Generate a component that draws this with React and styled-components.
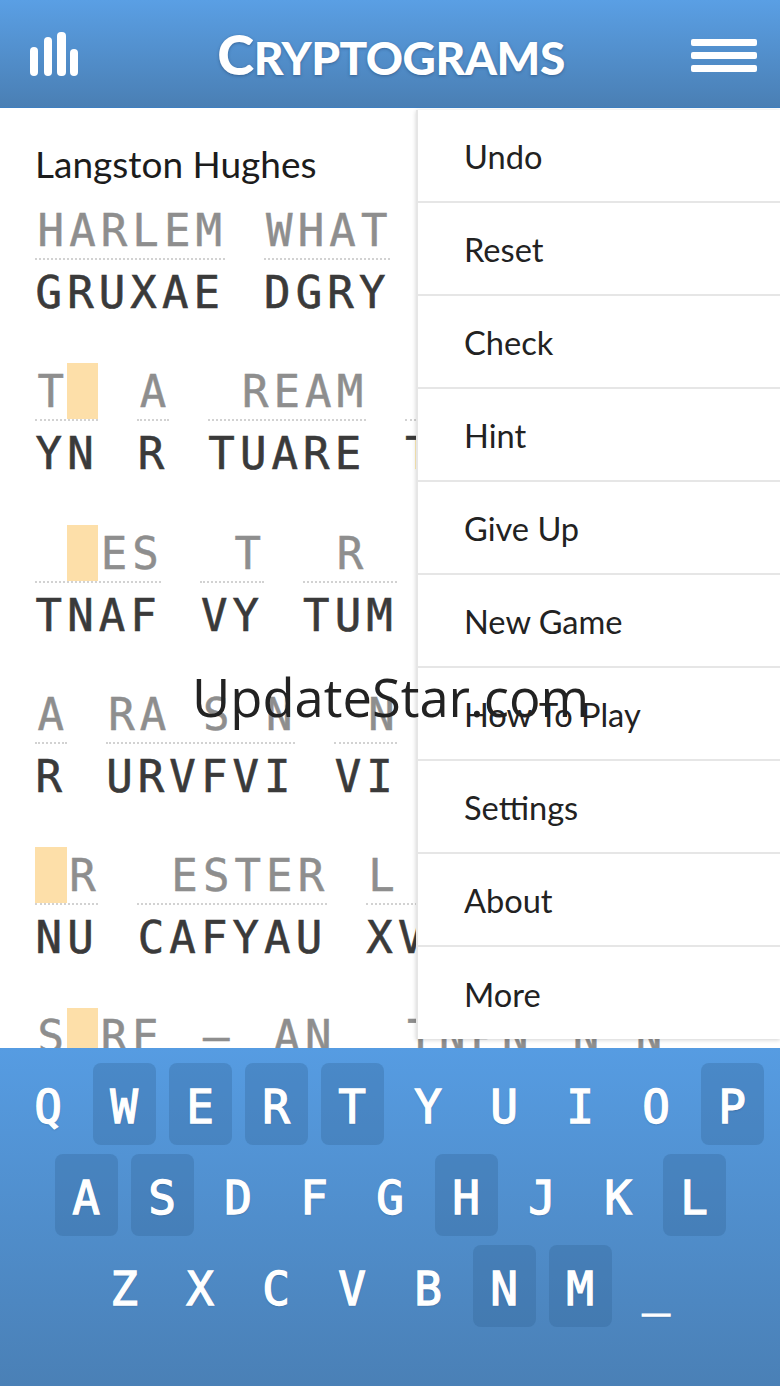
import styled, {createGlobalStyle} from "styled-components";

const GlobalStyle = createGlobalStyle`
  html, body {
    margin: 0;
    padding: 0;
    background: white;
  }
`;

const Page = styled.div`
  display: flex;
  flex-direction: column;
  position: relative;
  width: 780px;
  height: 1386px;
  overflow: hidden;
  font-family: "Lato", sans-serif;
`;

const Header = styled.div`
  display: flex;
  align-items: center;
  justify-content: space-between;
  flex: 0 0 108px;
  box-sizing: border-box;
  padding: 0 23px 0 30px;
  background: linear-gradient(#5a9fe4, #4a7fb4);
  border-bottom: 1px solid #3f7fc0;
`;

const Title = styled.div`
  margin-left: 13px;
  color: white;
  font-weight: 900;
  font-size: 46px;
  line-height: 1;
  letter-spacing: -0.5px;
  text-shadow: 0 1px 3px rgba(30, 60, 100, 0.5);
`;

const BigLetter = styled.span`
  font-size: 56px;
`;

const Burger = styled.div`
  display: flex;
  flex-direction: column;
  gap: 6px;
  width: 66px;
  margin-top: 3px;
`;

const BurgerLine = styled.div`
  height: 7px;
  border-radius: 2px;
  background: white;
`;

const Board = styled.div`
  flex: 0 0 940px;
  box-sizing: border-box;
  padding: 34px 0 0 35px;
  overflow: hidden;
  background: white;
`;

const Author = styled.div`
  color: #1c1c1c;
  font-size: 37px;
  line-height: 44px;
  height: 60px;
`;

const Line = styled.div`
  display: flex;
  gap: 39px;
  height: 161.25px;
  white-space: nowrap;
`;

const Word = styled.div`
  display: flex;
  flex-direction: column;
`;

const HintRow = styled.div`
  display: flex;
  height: 56px;
  border-bottom: 2px dotted #d2d2d2;
`;

const HintCell = styled.div`
  width: 31.6px;
  flex: none;
  font-family: "DejaVu Sans Mono", monospace;
  font-size: 44px;
  line-height: 58px;
  text-align: center;
  color: #8e8e8e;
  -webkit-text-stroke: 0.5px #8e8e8e;
  background: ${(p) => (p.$active ? "#fddfa9" : "transparent")};
`;

const CipherRow = styled.div`
  display: flex;
  height: 62px;
  margin-left: -2px;
`;

const CipherCell = styled.div`
  width: 31.6px;
  flex: none;
  font-family: "DejaVu Sans Mono", monospace;
  font-size: 44px;
  line-height: 66px;
  text-align: center;
  color: #3a3a3a;
  -webkit-text-stroke: 0.6px #3a3a3a;
`;

const Menu = styled.div`
  position: absolute;
  top: 110px;
  right: 0;
  width: 362px;
  background: white;
  border-left: 2px solid #e6e6e6;
  box-shadow: 0 1px 4px rgba(0, 0, 0, 0.18);
`;

const MenuItem = styled.div`
  box-sizing: border-box;
  height: ${(p) => (p.$last ? "92px" : "93px")};
  padding: 2px 0 0 46px;
  display: flex;
  align-items: center;
  color: #222;
  font-size: 32.6px;
  border-bottom: ${(p) => (p.$last ? "none" : "2px solid #e6e6e6")};
`;

const Keyboard = styled.div`
  flex: 1;
  display: flex;
  flex-direction: column;
  gap: 9px;
  padding-top: 15px;
  background: linear-gradient(#569ce2, #4a80b6);
`;

const KeyRow = styled.div`
  display: flex;
  justify-content: center;
  gap: 13px;
`;

const Key = styled.div`
  box-sizing: border-box;
  width: 63px;
  height: 82px;
  padding-top: 6px;
  border-radius: 8px;
  display: flex;
  align-items: center;
  justify-content: center;
  color: white;
  font-family: "DejaVu Sans Mono", monospace;
  font-size: 46px;
  -webkit-text-stroke: 1.3px white;
  text-shadow: 0 1px 2px rgba(30, 60, 100, 0.4);
  background: ${(p) => (p.$used ? "rgba(50, 100, 150, 0.32)" : "transparent")};
`;

const Watermark = styled.div`
  position: absolute;
  left: 192px;
  top: 660px;
  color: #222;
  font-family: "Open Sans", sans-serif;
  font-size: 52.5px;
  line-height: 74px;
`;

const lines = [
  [["HARLEM", "GRUXAE"], ["WHAT", "DGRY"]],
  [["T*", "YN"], ["A", "R"], [" REAM", "TUARE"], [" ", "T"]],
  [[" *ES", "TNAF"], [" T", "VY"], [" R ", "TUM"]],
  [["A", "R"], ["RA S N", "URVFVI"], [" N", "VI"]],
  [["*R", "NU"], [" ESTER", "CAFYAU"], ["L ", "XV"]],
  [["S*RE", "RRRR"], ["—", "A"], ["AN", "RR"], [" TNPN", "RRRRR"], ["N N", "RRR"]],
];

const menuItems = ["Undo", "Reset", "Check", "Hint", "Give Up", "New Game", "How To Play", "Settings", "About", "More"];

const rows = ["QWERTYUIOP", "ASDFGHJKL", "ZXCVBNM_"];
const usedKeys = "WERTPASHLNM";

function Bars() {
  return (
    <svg width="48" height="44" viewBox="0 0 48 44">
      <rect x="0" y="15" width="8" height="29" rx="4" fill="white"/>
      <rect x="14" y="5" width="8" height="39" rx="4" fill="white"/>
      <rect x="27" y="0" width="9" height="44" rx="4" fill="white"/>
      <rect x="40" y="17" width="8" height="27" rx="4" fill="white"/>
    </svg>
  );
}

export default function App() {
  return (
    <Page>
      <GlobalStyle/>
      <Header>
        <Bars/>
        <Title><BigLetter>C</BigLetter>RYPTOGRAMS</Title>
        <Burger>
          <BurgerLine/>
          <BurgerLine/>
          <BurgerLine/>
        </Burger>
      </Header>
      <Board>
        <Author>Langston Hughes</Author>
        {lines.map((line, i) => (
          <Line key={i}>
            {line.map(([hint, cipher], j) => (
              <Word key={j}>
                <HintRow>
                  {[...hint].map((c, k) => (
                    <HintCell key={k} $active={c === "*"}>{c === "*" ? "" : c}</HintCell>
                  ))}
                </HintRow>
                <CipherRow>
                  {[...cipher].map((c, k) => (
                    <CipherCell key={k}>{c}</CipherCell>
                  ))}
                </CipherRow>
              </Word>
            ))}
          </Line>
        ))}
      </Board>
      <Keyboard>
        {rows.map((row) => (
          <KeyRow key={row}>
            {[...row].map((c) => (
              <Key key={c} $used={usedKeys.includes(c)}>{c}</Key>
            ))}
          </KeyRow>
        ))}
      </Keyboard>
      <Menu>
        {menuItems.map((item, i) => (
          <MenuItem key={item} $last={i === menuItems.length - 1}>{item}</MenuItem>
        ))}
      </Menu>
      <Watermark>UpdateStar.com</Watermark>
    </Page>
  );
}
